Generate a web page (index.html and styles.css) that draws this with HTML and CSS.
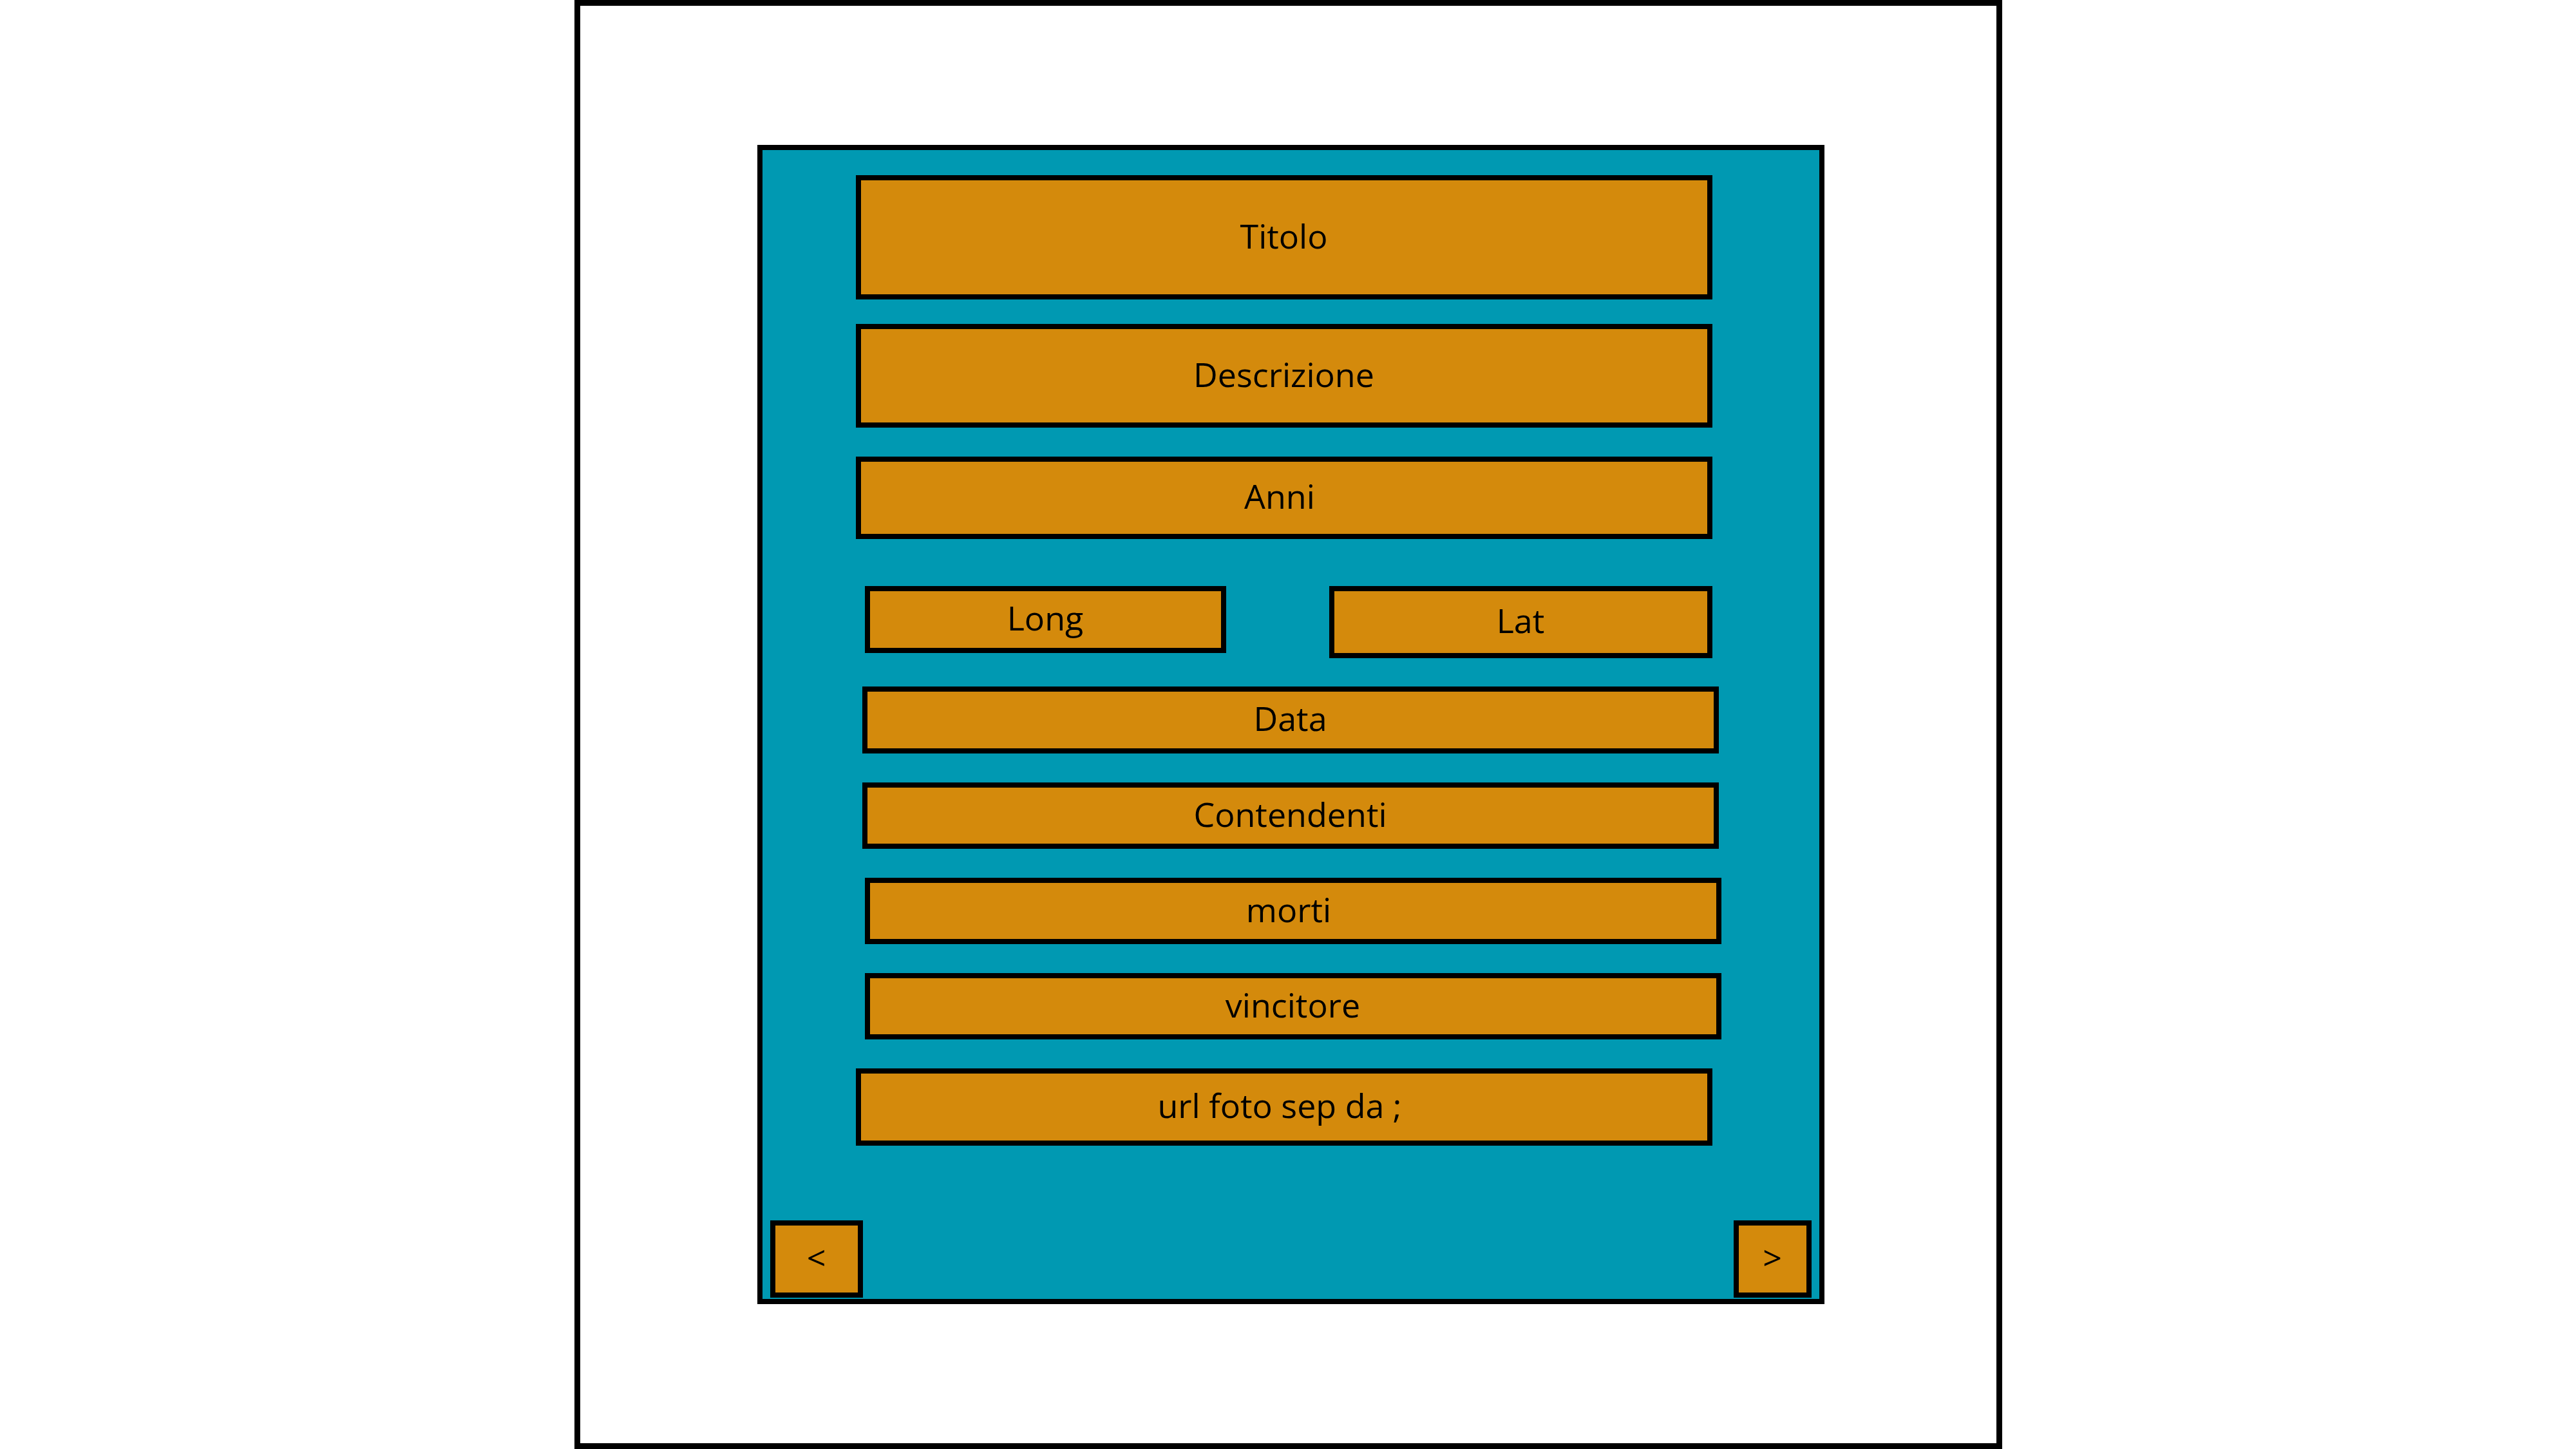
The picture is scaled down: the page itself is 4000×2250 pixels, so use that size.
FILE: index.html
```html
<!DOCTYPE html>
<html lang="it">
<head>
<meta charset="utf-8">
<title>Form</title>
<link rel="stylesheet" href="styles.css">
</head>
<body>
<div class="frame">
  <div class="panel">
    <div class="field f-titolo">Titolo</div>
    <div class="field f-descr">Descrizione</div>
    <div class="field f-anni shift">Anni</div>
    <div class="coords">
      <div class="field f-long">Long</div>
      <div class="field f-lat">Lat</div>
    </div>
    <div class="field f-data">Data</div>
    <div class="field f-cont">Contendenti</div>
    <div class="field f-morti shift">morti</div>
    <div class="field f-vinc">vincitore</div>
    <div class="field f-url shift">url foto sep da ;</div>
    <div class="nav">
      <div class="field btn btn-prev">&lt;</div>
      <div class="field btn btn-next">&gt;</div>
    </div>
  </div>
</div>
</body>
</html>
```
FILE: styles.css
```css
html, body {
  margin: 0;
  padding: 0;
  background: #ffffff;
}

body {
  font-family: "Open Sans", "Noto Sans", sans-serif;
  color: #000000;
}

.frame {
  box-sizing: border-box;
  width: 2217px;
  height: 2250px;
  margin: 0 auto;
  border: 9px solid #000000;
  padding-top: 216px;
  padding-left: 275px;
  background: #ffffff;
}

.panel {
  box-sizing: border-box;
  width: 1657px;
  height: 1800px;
  border: 8px solid #000000;
  background: #0099b2;
  display: flex;
  flex-direction: column;
  align-items: flex-start;
}

.field {
  box-sizing: border-box;
  border: 8px solid #000000;
  background: #d48a0c;
  display: flex;
  align-items: center;
  justify-content: center;
  padding-bottom: 6px;
  font-size: 52px;
  line-height: 1;
  white-space: pre;
}

.shift {
  padding-right: 13px;
}

.f-titolo {
  margin-top: 39px;
  margin-left: 145px;
  width: 1330px;
  height: 193px;
}

.f-descr {
  margin-top: 38px;
  margin-left: 145px;
  width: 1330px;
  height: 161px;
}

.f-anni {
  margin-top: 45px;
  margin-left: 145px;
  width: 1330px;
  height: 128px;
}

.coords {
  margin-top: 73px;
  margin-left: 159px;
  display: flex;
  align-items: flex-start;
}

.f-long {
  width: 561px;
  height: 104px;
}

.f-lat {
  margin-left: 160px;
  width: 595px;
  height: 112px;
}

.f-data {
  margin-top: 44px;
  margin-left: 155px;
  width: 1330px;
  height: 104px;
}

.f-cont {
  margin-top: 45px;
  margin-left: 155px;
  width: 1330px;
  height: 103px;
}

.f-morti {
  margin-top: 45px;
  margin-left: 159px;
  width: 1330px;
  height: 103px;
}

.f-vinc {
  margin-top: 45px;
  margin-left: 159px;
  width: 1330px;
  height: 103px;
}

.f-url {
  margin-top: 45px;
  margin-left: 145px;
  width: 1330px;
  height: 120px;
}

.nav {
  margin-top: auto;
  align-self: stretch;
  box-sizing: border-box;
  padding: 0 12px 2px 12px;
  display: flex;
  justify-content: space-between;
}

.btn {
  height: 120px;
}

.btn-prev {
  width: 144px;
}

.btn-next {
  width: 121px;
}
```
